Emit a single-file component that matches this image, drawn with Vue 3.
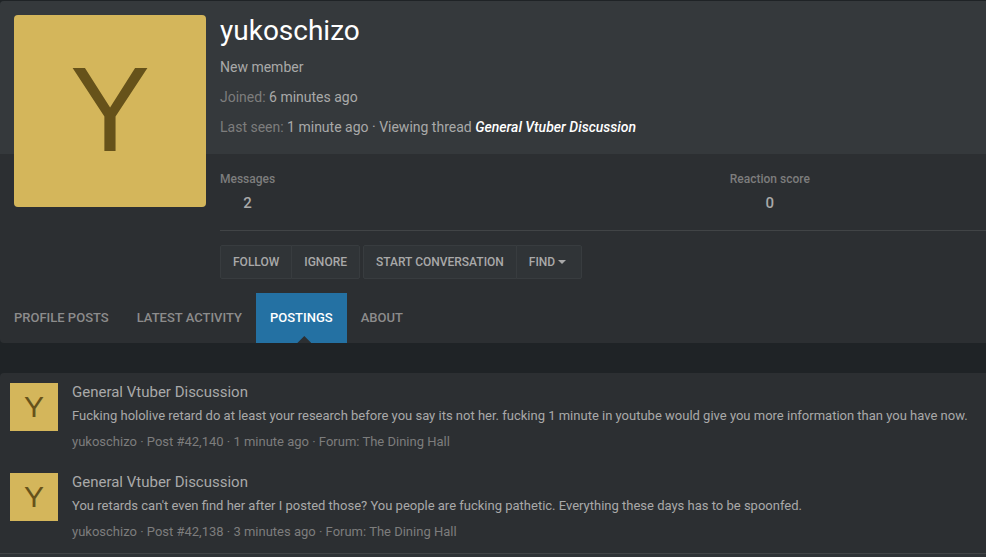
<script setup>
import { ref } from 'vue'

const activeTab = ref('Postings')
const tabs = ['Profile posts', 'Latest activity', 'Postings', 'About']

const stats = [
  { label: 'Messages', value: '2' },
  { label: 'Reaction score', value: '0' },
]

const posts = [
  {
    id: '42,140',
    title: 'General Vtuber Discussion',
    snippet:
      'Fucking hololive retard do at least your research before you say its not her. fucking 1 minute in youtube would give you more information than you have now.',
    time: '1 minute ago',
  },
  {
    id: '42,138',
    title: 'General Vtuber Discussion',
    snippet:
      "You retards can't even find her after I posted those? You people are fucking pathetic. Everything these days has to be spoonfed.",
    time: '3 minutes ago',
  },
]
</script>

<template>
  <main class="page">
    <section class="card profile">
      <div class="profile-top">
        <a href="#" class="avatar avatar-large">Y</a>
        <div class="identity">
          <h1>yukoschizo</h1>
          <p class="blurb">New member</p>
          <p class="blurb"><span class="dim">Joined:</span> 6 minutes ago</p>
          <p class="blurb">
            <span class="dim">Last seen:</span> 1 minute ago · Viewing thread
            <a href="#" class="thread">General Vtuber Discussion</a>
          </p>
        </div>
      </div>

      <div class="profile-main">
        <div class="stats">
          <dl v-for="stat in stats" :key="stat.label">
            <dt>{{ stat.label }}</dt>
            <dd>{{ stat.value }}</dd>
          </dl>
        </div>
        <div class="actions">
          <div class="group">
            <button type="button">Follow</button>
            <button type="button">Ignore</button>
          </div>
          <div class="group">
            <button type="button">Start conversation</button>
            <button type="button">
              Find
              <svg class="caret" viewBox="0 0 8 4" aria-hidden="true">
                <path d="M0 0h8L4 4z" />
              </svg>
            </button>
          </div>
        </div>
      </div>

      <nav class="tabs">
        <a
          v-for="tab in tabs"
          :key="tab"
          href="#"
          :class="{ active: tab === activeTab }"
          @click.prevent="activeTab = tab"
          >{{ tab }}</a
        >
      </nav>
    </section>

    <section class="card results">
      <article v-for="post in posts" :key="post.id" class="post">
        <a href="#" class="avatar avatar-small">Y</a>
        <div class="post-body">
          <h2><a href="#">{{ post.title }}</a></h2>
          <p class="snippet">{{ post.snippet }}</p>
          <p class="meta">
            <a href="#">yukoschizo</a> · Post #{{ post.id }} · {{ post.time }} · Forum:
            <a href="#">The Dining Hall</a>
          </p>
        </div>
      </article>
      <footer class="results-footer"></footer>
    </section>
  </main>
</template>

<style>
body {
  background: #1f2326;
}
</style>

<style scoped>
.page {
  padding-top: 1px;
  font-family: Roboto, 'Liberation Sans', sans-serif;
  font-size: 14px;
  line-height: 20px;
  color: #a9a9a9;
}

h1,
h2,
p,
dl,
dd {
  margin: 0;
}

a {
  color: inherit;
  text-decoration: none;
}

.card {
  background: #2c2f32;
  border-radius: 4px 0 0 4px;
  overflow: hidden;
}

.profile {
  margin-bottom: 30px;
}

.results {
  border-radius: 4px 0 0 0;
}

.profile-top {
  display: flex;
  gap: 14px;
  height: 153px;
  padding: 14px 14px 0;
  box-sizing: border-box;
  background: #35393c;
}

.avatar {
  display: flex;
  flex: none;
  align-items: center;
  justify-content: center;
  box-sizing: border-box;
  background: #d4b65b;
  color: #66521a;
  font-family: 'Liberation Sans', sans-serif;
}

.avatar-large {
  width: 192px;
  height: 192px;
  padding-bottom: 4px;
  border-radius: 4px;
  font-size: 120px;
}

.avatar-small {
  width: 48px;
  height: 48px;
  font-size: 30px;
}

.identity h1 {
  font-size: 28px;
  font-weight: 400;
  line-height: 32px;
  color: #fff;
}

.blurb {
  margin-top: 10px;
}

.dim {
  color: #7d7d7d;
}

.thread {
  color: #fff;
  font-style: italic;
  font-weight: 500;
}

.profile-main {
  padding-left: 220px;
}

.stats {
  display: flex;
  justify-content: space-between;
  padding: 14px 23% 14px 0;
  border-bottom: 1px solid #414446;
  text-align: center;
  font-weight: 500;
}

.stats dt {
  font-size: 12px;
  line-height: 22px;
  color: #7d7d7d;
}

.stats dd {
  font-size: 15px;
  line-height: 26px;
}

.actions {
  display: flex;
  gap: 3px;
  padding: 14px 0;
}

.group {
  display: flex;
}

.group button {
  height: 34px;
  padding: 0 12px;
  border: 1px solid #383c3f;
  background: #303437;
  color: #a9a9a9;
  font-family: inherit;
  font-size: 12px;
  font-weight: 500;
  text-transform: uppercase;
  cursor: pointer;
}

.group button:first-child {
  border-radius: 2px 0 0 2px;
}

.group button:last-child {
  margin-left: -1px;
  border-radius: 0 2px 2px 0;
}

.caret {
  width: 8px;
  height: 4px;
  margin: 0 3px 2px 0;
  fill: currentColor;
}

.tabs {
  display: flex;
}

.tabs a {
  position: relative;
  padding: 0 14px;
  font-size: 13px;
  font-weight: 500;
  line-height: 50px;
  text-transform: uppercase;
  color: #8c8c8c;
}

.tabs .active {
  background: #2471a3;
  color: #fff;
}

.tabs .active::after {
  content: '';
  position: absolute;
  bottom: 0;
  left: calc(50% - 4px);
  width: 14px;
  height: 7px;
  background: #2c2f32;
  clip-path: polygon(50% 0, 100% 100%, 0 100%);
}

.post {
  display: flex;
  gap: 14px;
  height: 80px;
  padding: 10px 10px 0;
}

.post-body h2 {
  font-size: 15px;
  font-weight: 400;
  line-height: 18px;
}

.snippet,
.meta {
  font-size: 13px;
}

.snippet {
  margin-top: 5px;
}

.meta {
  margin-top: 6px;
  color: #7d7d7d;
}

.results-footer {
  height: 3px;
  border-top: 1px solid #414446;
  background: #2f3336;
}
</style>
